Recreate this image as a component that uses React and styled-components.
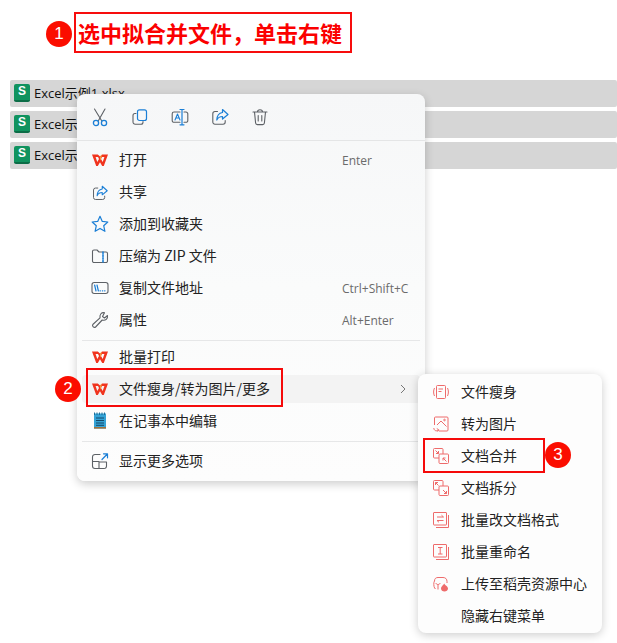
import React from 'react'
import styled, { createGlobalStyle } from 'styled-components';

const Global = createGlobalStyle`
  html, body {
    margin: 0;
    padding: 0;
    background: #fff;
    font-family: "Open Sans", "Noto Sans CJK SC", sans-serif;
  }
`;

const Page = styled.div`
  position: relative;
  width: 617px;
  height: 643px;
  overflow: hidden;
  padding-top: 12px;
  box-sizing: border-box;
`;

const Heading = styled.div`
  display: flex;
  align-items: center;
  gap: 2px;
  margin-left: 46px;
  height: 41px;
`;

const Badge = styled.span`
  width: 26px;
  height: 26px;
  border-radius: 50%;
  background: #fb0d00;
  color: #fff;
  font-size: 17px;
  line-height: 26px;
  text-align: center;
  flex: none;
  font-family: "Liberation Sans", sans-serif;
`;

const HeadingBadge = styled(Badge)`
  margin-top: 3px;
`;

const HeadingText = styled.h1`
  margin: 0;
  box-sizing: border-box;
  width: 278px;
  height: 41px;
  border: 2px solid #f70d0d;
  color: #fb0000;
  font-family: "Noto Sans CJK SC", sans-serif;
  font-size: 22px;
  line-height: 37px;
  font-weight: 700;
  padding-left: 2px;
  white-space: nowrap;
`;

const FileList = styled.div`
  display: flex;
  flex-direction: column;
  gap: 4px;
  margin: 27px 0 0 10px;
`;

const FileRow = styled.div`
  display: flex;
  align-items: center;
  gap: 4px;
  height: 27px;
  padding-left: 4px;
  background: #d6d6d6;
  border-radius: 2px;
  font-size: 13px;
  color: #111;
`;

const FileName = styled.span`
  padding-bottom: 2px;
`;

const SheetIcon = styled.span`
  width: 16px;
  height: 16px;
  margin-top: -2px;
  border-radius: 2px;
  background: #10935f;
  border-bottom: 2px solid #0c6d47;
  color: #fff;
  font-family: "Liberation Sans", sans-serif;
  font-size: 12px;
  font-weight: 700;
  line-height: 14px;
  text-align: center;
`;

const Menu = styled.div`
  position: absolute;
  left: 77px;
  top: 94px;
  width: 348px;
  height: 387px;
  box-sizing: border-box;
  border-radius: 8px;
  background: linear-gradient(180deg, #f6f7f8 0%, #fafbfb 50%, #fdfdfd 100%);
  box-shadow: 0 3px 10px rgba(0, 0, 0, 0.2);
`;

const Toolbar = styled.div`
  display: flex;
  align-items: center;
  gap: 20px;
  height: 46px;
  padding-left: 13px;
  border-bottom: 1px solid #e4e5e6;
`;

const ToolButton = styled.span`
  display: flex;
  width: 20px;
  height: 20px;
`;

const Group = styled.div`
  display: flex;
  flex-direction: column;
  gap: 4px;
  padding: ${({ $pad }) => $pad};
  border-bottom: ${({ $last }) => ($last ? 'none' : '1px solid #e6e7e8')};
  margin: 0 5px;
`;

const Row = styled.div`
  display: flex;
  align-items: center;
  height: 28px;
  padding-left: 9px;
  border-radius: 4px;
  font-family: "Noto Sans CJK SC", sans-serif;
  font-size: 14px;
  color: #222;
  background: ${({ $active }) => ($active ? '#f3f3f3' : 'transparent')};
`;

const RowIcon = styled.span`
  display: flex;
  width: 18px;
  height: 18px;
  margin-right: 10px;
  flex: none;
`;

const Label = styled.span`
  flex: 1;
  padding-bottom: 2px;
  white-space: nowrap;
`;

const Shortcut = styled.span`
  width: 78px;
  font-family: "Open Sans", sans-serif;
  font-size: 12px;
  color: #6b6b6b;
  white-space: nowrap;
`;

const Chevron = styled.svg`
  width: 10px;
  height: 10px;
  margin-right: 12px;
`;

const SubMenu = styled.div`
  position: absolute;
  left: 418px;
  top: 374px;
  width: 184px;
  height: 259px;
  box-sizing: border-box;
  padding: 2px 0;
  border-radius: 8px;
  background: #fdfdfd;
  box-shadow: 0 2px 10px rgba(0, 0, 0, 0.2);
`;

const SubRow = styled.div`
  display: flex;
  align-items: center;
  height: 32px;
  padding-left: 15px;
  font-family: "Noto Sans CJK SC", sans-serif;
  font-size: 14px;
  color: #222;
`;

const SubIcon = styled.span`
  display: flex;
  width: 16px;
  height: 16px;
  margin-right: 12px;
  flex: none;
`;

const Outline = styled.div`
  position: absolute;
  left: ${({ $x }) => $x}px;
  top: ${({ $y }) => $y}px;
  width: ${({ $w }) => $w}px;
  height: ${({ $h }) => $h}px;
  box-sizing: border-box;
  border: 2px solid #f50a0a;
`;

const FloatBadge = styled(Badge)`
  position: absolute;
  left: ${({ $x }) => $x}px;
  top: ${({ $y }) => $y}px;
`;

const blue = '#1b7fd6';
const grey = '#5d6166';
const pink = '#ee6b6b';

const Svg = ({ size = 20, children }) => (
  <svg width={size} height={size} viewBox={`0 0 ${size} ${size}`} fill="none" strokeWidth="1.1" strokeLinecap="round" strokeLinejoin="round">
    {children}
  </svg>
);

const CutIcon = () => (
  <Svg>
    <path d="M4.5 2 L11.5 13.5 M15 2 L8.5 13.5" stroke={grey} />
    <circle cx="6" cy="16" r="2.6" stroke={blue} strokeWidth="1.3" />
    <circle cx="14" cy="16" r="2.6" stroke={blue} strokeWidth="1.3" />
  </Svg>
);

const CopyIcon = () => (
  <Svg>
    <path d="M6 6.5 H5 a2 2 0 0 0 -2 2 V15 a2.2 2.2 0 0 0 2.2 2.2 H11 a2 2 0 0 0 2 -2 V14.5" stroke={grey} />
    <rect x="7.5" y="2.8" width="9" height="10.7" rx="2" stroke={blue} strokeWidth="1.2" />
  </Svg>
);

const RenameIcon = () => (
  <Svg>
    <path d="M10 5 H4 a1.8 1.8 0 0 0 -1.8 1.8 V13.5 A1.8 1.8 0 0 0 4 15.3 H10 M14 5 H16 a1.8 1.8 0 0 1 1.8 1.8 V13.5 A1.8 1.8 0 0 1 16 15.3 H14" stroke={grey} />
    <path d="M10 2.5 H14 M12 2.5 V17.8 M10 17.8 H14" stroke={blue} strokeWidth="1.2" />
    <path d="M5 13 L7.5 7 L10 13 M6 11 H9" stroke={blue} />
  </Svg>
);

const ShareIcon = () => (
  <Svg>
    <path d="M7.5 4.5 H5 a2.2 2.2 0 0 0 -2.2 2.2 V15 A2.2 2.2 0 0 0 5 17.2 H13 a2.2 2.2 0 0 0 2.2 -2.2 V13.5" stroke={grey} />
    <path d="M12.5 2.5 L18 7.5 L12.5 12 V9.5 C9.5 9.5 8 10.5 6.8 13 C7 8.5 9 6 12.5 5.5 Z" stroke={blue} strokeWidth="1.2" />
  </Svg>
);

const TrashIcon = () => (
  <Svg>
    <path d="M3 5 H17 M7.5 4.8 C7.5 2 12.5 2 12.5 4.8 M4.5 5 L5.6 16 a1.8 1.8 0 0 0 1.8 1.6 H12.6 a1.8 1.8 0 0 0 1.8 -1.6 L15.5 5 M8.2 8.5 V14 M11.8 8.5 V14" stroke={grey} />
  </Svg>
);

const WpsIcon = () => (
  <svg width="18" height="18" viewBox="0 0 18 18">
    <path d="M1 3.5 H6.8 L9 5.5 L11.2 3.5 H17 L12.8 15 H11.2 L9 11.2 L6.8 15 H5.2 Z M4.6 6 L6.3 11 L8 7.9 L7 6 Z M11 6 L10 7.9 L11.7 11 L13.4 6 Z" fill="#f0341e" fillRule="evenodd" />
    <path d="M9 5.5 L11 3.5 L10 7.9 L9 9.6 Z" fill="#f99a3b" />
  </svg>
);

const StarIcon = () => (
  <svg width="18" height="18" viewBox="0 0 18 18" fill="none">
    <path d="M9 1.3 L11.3 6.4 L16.8 7 L12.7 10.7 L13.9 16.3 L9 13.4 L4.1 16.3 L5.3 10.7 L1.2 7 L6.7 6.4 Z" stroke={blue} strokeWidth="1.2" strokeLinejoin="round" />
  </svg>
);

const ZipIcon = () => (
  <Svg size={18}>
    <path d="M1.5 4.5 a1.5 1.5 0 0 1 1.5 -1.5 H6 L8 5 H15 a1.5 1.5 0 0 1 1.5 1.5 V14 a1.5 1.5 0 0 1 -1.5 1.5 H3 A1.5 1.5 0 0 1 1.5 14 Z" stroke={grey} />
    <path d="M12 5 V15" stroke={blue} strokeWidth="1.6" strokeDasharray="1.6 1.2" />
  </Svg>
);

const PathIcon = () => (
  <Svg size={18}>
    <rect x="1" y="3.5" width="16" height="11" rx="2.2" stroke={grey} />
    <path d="M3.6 6 L5 12 M6 6 L7.4 12 M9 11.8 H9.4 M11.4 11.8 H11.8 M13.6 11.8 H14" stroke={blue} strokeWidth="1.2" />
  </Svg>
);

const WrenchIcon = () => (
  <Svg size={18}>
    <path d="M16.5 4.5 L13.5 7 L11.5 5.5 L13.5 1.8 C10.5 1 8.5 3.5 9 6.8 L1.8 13.5 C0.8 15 3 17.3 4.6 16 L11.2 9 C14.5 9.8 17 8 16.5 4.5 Z" stroke={grey} />
  </Svg>
);

const NotepadIcon = () => (
  <svg width="18" height="18" viewBox="0 0 18 18">
    <rect x="3" y="1.5" width="12" height="15" fill="#35a3d6" />
    <rect x="3" y="15" width="12" height="1.6" fill="#a0703a" />
    <path d="M3.5 0.5 V3 M6 0.5 V3 M8.5 0.5 V3 M11 0.5 V3 M13.5 0.5 V3" stroke="#1f6f99" strokeWidth="1" />
    <path d="M5 6 H13 M5 8.5 H13 M5 11 H13 M5 13.3 H13" stroke="#12496a" strokeWidth="1" />
  </svg>
);

const MoreIcon = () => (
  <Svg size={18}>
    <path d="M9 2.5 H4 A2.5 2.5 0 0 0 1.5 5 V14 A2.5 2.5 0 0 0 4 16.5 H13 A2.5 2.5 0 0 0 15.5 14 V10 H8 V16.5 M1.5 9.5 H8 V10" stroke={grey} />
    <path d="M11 7.5 L16.3 2 M12.5 1.8 H16.5 V5.8" stroke={blue} strokeWidth="1.2" />
  </Svg>
);

const Pink = ({ children }) => (
  <svg width="16" height="16" viewBox="0 0 16 16" fill="none" stroke={pink} strokeWidth="1">
    {children}
  </svg>
);

const SlimIcon = () => (
  <Pink>
    <rect x="3.5" y="1.5" width="9" height="13" rx="1" />
    <path d="M5.5 5 H10 M5.5 7.5 H8.5" />
    <path d="M1.5 4 C0.3 6.5 0.3 9.5 1.5 12 M14.5 4 C15.7 6.5 15.7 9.5 14.5 12" />
  </Pink>
);

const PictureIcon = () => (
  <Pink>
    <path d="M1.5 9 V2 a1 1 0 0 1 1 -1 H14 a1 1 0 0 1 1 1 V14 a1 1 0 0 1 -1 1 H6" />
    <path d="M4 9 L8 5 L13.5 10.5" />
    <circle cx="11.5" cy="4" r="0.8" />
    <path d="M0.8 12 C1 14.8 3.5 15.6 5.5 14 M3.8 12.6 L5.8 13.8 L4.6 15.6" />
  </Pink>
);

const MergeIcon = () => (
  <Pink>
    <rect x="0.5" y="0.5" width="9.5" height="9.5" rx="1" />
    <rect x="6" y="6" width="9.5" height="9.5" rx="1" fill="#fdfdfd" />
    <path d="M2.5 2.5 L5.5 5.5 M5.5 3 V5.5 H3 M13.5 13.5 L10 10 M10 12.5 V10 H12.5" />
  </Pink>
);

const SplitIcon = () => (
  <Pink>
    <rect x="0.5" y="0.5" width="9.5" height="9.5" rx="1" />
    <rect x="6" y="6" width="9.5" height="9.5" rx="1" fill="#fdfdfd" />
    <path d="M5.5 5.5 L2.5 2.5 M2.5 5 V2.5 H5 M10 10 L13.5 13.5 M13.5 11 V13.5 H11" />
  </Pink>
);

const FormatIcon = () => (
  <Pink>
    <rect x="0.5" y="0.5" width="13" height="12.5" rx="0.5" />
    <path d="M15.5 3 V15.5 H3 M4 5 H10.5 L8.5 3.2 M10.5 8.5 H4 L6 10.3" />
  </Pink>
);

const BatchNameIcon = () => (
  <Pink>
    <rect x="0.5" y="0.5" width="13" height="12.5" rx="0.5" />
    <path d="M15.5 3 V15.5 H3 M5 3.5 H9.5 M7.2 3.5 V10 M5 10 H9.5" />
  </Pink>
);

const UploadIcon = () => (
  <Pink>
    <path d="M2.5 12.5 H1.8 C0.5 10.5 0.5 6 1.5 5 C1.5 2.5 3 1.5 5 1.5 H10 C12.5 1.5 14 3 14 5.5 V7 M5 13.5 V8.5 M3 7 C3 9 7 9 7 7" />
    <path d="M11.5 7.5 C11.5 9.5 15 10 15 12.5 C15 14.5 13.2 15.5 11.5 15.5 C9.5 15.5 8 14.5 8 12.5 C8 11 9 10.5 9.5 9.5 Z" fill={pink} stroke="none" />
  </Pink>
);

const mainGroups = [
  {
    pad: '5px 0 6px',
    rows: [
      { icon: <WpsIcon />, text: '打开', key: 'Enter' },
      { icon: <ShareIcon />, text: '共享' },
      { icon: <StarIcon />, text: '添加到收藏夹' },
      { icon: <ZipIcon />, text: '压缩为 ZIP 文件' },
      { icon: <PathIcon />, text: '复制文件地址', key: 'Ctrl+Shift+C' },
      { icon: <WrenchIcon />, text: '属性', key: 'Alt+Enter' },
    ],
  },
  {
    pad: '2px 0 6px',
    rows: [
      { icon: <WpsIcon />, text: '批量打印' },
      { icon: <WpsIcon />, text: '文件瘦身/转为图片/更多', active: true },
      { icon: <NotepadIcon />, text: '在记事本中编辑' },
    ],
  },
  {
    pad: '5px 0 0',
    last: true,
    rows: [{ icon: <MoreIcon />, text: '显示更多选项' }],
  },
];

const subRows = [
  { icon: <SlimIcon />, text: '文件瘦身' },
  { icon: <PictureIcon />, text: '转为图片' },
  { icon: <MergeIcon />, text: '文档合并' },
  { icon: <SplitIcon />, text: '文档拆分' },
  { icon: <FormatIcon />, text: '批量改文档格式' },
  { icon: <BatchNameIcon />, text: '批量重命名' },
  { icon: <UploadIcon />, text: '上传至稻壳资源中心' },
  { icon: null, text: '隐藏右键菜单' },
];

const App = () => {
  return (
    <Page>
      <Global />
      <Heading>
        <HeadingBadge>1</HeadingBadge>
        <HeadingText>选中拟合并文件，单击右键</HeadingText>
      </Heading>
      <FileList>
        {[0, 1, 2].map((i) => (
          <FileRow key={i}>
            <SheetIcon>S</SheetIcon>
            <FileName>Excel示例{i + 1}.xlsx</FileName>
          </FileRow>
        ))}
      </FileList>

      <Menu>
        <Toolbar>
          <ToolButton><CutIcon /></ToolButton>
          <ToolButton><CopyIcon /></ToolButton>
          <ToolButton><RenameIcon /></ToolButton>
          <ToolButton><ShareIcon /></ToolButton>
          <ToolButton><TrashIcon /></ToolButton>
        </Toolbar>
        {mainGroups.map((group, i) => (
          <Group key={i} $pad={group.pad} $last={group.last}>
            {group.rows.map((row) => (
              <Row key={row.text} $active={row.active}>
                <RowIcon>{row.icon}</RowIcon>
                <Label>{row.text}</Label>
                {row.key && <Shortcut>{row.key}</Shortcut>}
                {row.active && (
                  <Chevron viewBox="0 0 10 10" fill="none" stroke="#777" strokeWidth="1">
                    <path d="M3 1 L7 5 L3 9" />
                  </Chevron>
                )}
              </Row>
            ))}
          </Group>
        ))}
      </Menu>

      <SubMenu>
        {subRows.map((row) => (
          <SubRow key={row.text}>
            <SubIcon>{row.icon}</SubIcon>
            <Label>{row.text}</Label>
          </SubRow>
        ))}
      </SubMenu>

      <Outline $x={86} $y={368} $w={197} $h={39} />
      <FloatBadge $x={55} $y={376}>2</FloatBadge>
      <Outline $x={423} $y={438} $w={122} $h={35} />
      <FloatBadge $x={545} $y={442}>3</FloatBadge>
    </Page>
  )
}

export default App
